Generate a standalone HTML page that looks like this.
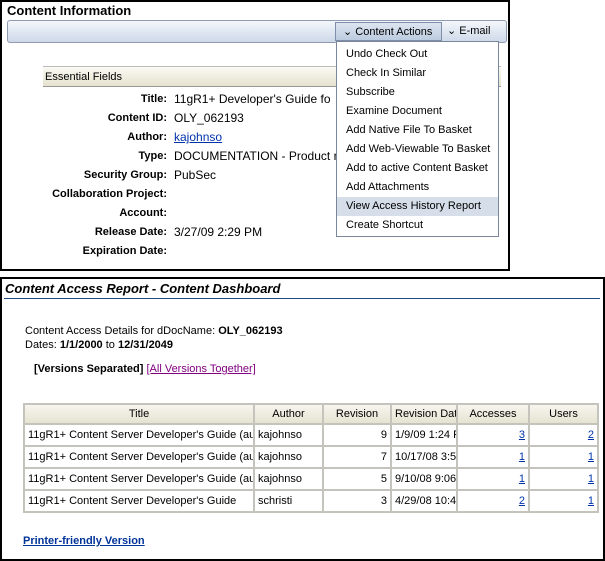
<!DOCTYPE html>
<html><head><style>
*{margin:0;padding:0;box-sizing:border-box}
body{width:605px;height:561px;background:#fff;font-family:"Liberation Sans",sans-serif;font-size:11px;color:#000;position:relative;overflow:hidden}
.abs{position:absolute}
#top{left:0;top:0;width:510px;height:271px;border:2px solid #000}
#bot{left:0;top:277px;width:605px;height:284px;border:2px solid #000}
.lbl{position:absolute;left:0;width:167px;text-align:right;font-weight:bold}
.val{position:absolute;left:174px;font-size:12px}
.row{position:absolute;left:0;height:19px;line-height:19px;width:340px}
.dd div{height:19px;line-height:19px;padding-left:9px;font-size:11px}
table{border-collapse:collapse;table-layout:fixed;position:absolute;left:23px;top:403px;width:574px;font-size:11px}
td,th{border:2px solid #c4c4bc;height:22px;padding:0 3px;white-space:nowrap;overflow:hidden}
th{background:linear-gradient(#f7f6ee,#e6e3d2);font-weight:normal;height:20px}
table a{color:#0033aa;text-decoration:underline}
</style></head><body>
<div id="top" class="abs"></div>
<div class="abs" style="left:7px;top:3px;font-weight:bold;font-size:13px">Content Information</div>
<div class="abs" style="left:7px;top:20px;width:500px;height:23px;border:1px solid #8e9bb0;border-radius:3px;background:linear-gradient(#f4f7fb,#cdd8e8)"></div>
<div class="abs" style="left:335px;top:22px;width:107px;height:19px;background:linear-gradient(#dde5f0,#bccbe0);border:1px solid #7f8ea8;line-height:18px;padding-left:7px">⌄ Content Actions</div>
<div class="abs" style="left:447px;top:22px;line-height:18px">⌄ E-mail</div>
<div class="abs" style="left:43px;top:66px;width:458px;height:21px;background:linear-gradient(#fbfaf3,#e5e2cf);border-top:1px solid #bbb;border-bottom:1px solid #999;line-height:20px;padding-left:2px">Essential Fields</div>
<div class="abs" style="left:0;top:90px;width:340px">
<div class="row" style="top:0"><span class="lbl">Title:</span><span class="val">11gR1+ Developer's Guide fo</span></div>
<div class="row" style="top:19px"><span class="lbl">Content ID:</span><span class="val">OLY_062193</span></div>
<div class="row" style="top:38px"><span class="lbl">Author:</span><span class="val" style="color:#0033aa;text-decoration:underline">kajohnso</span></div>
<div class="row" style="top:57px"><span class="lbl">Type:</span><span class="val">DOCUMENTATION - Product r</span></div>
<div class="row" style="top:76px"><span class="lbl">Security Group:</span><span class="val">PubSec</span></div>
<div class="row" style="top:95px"><span class="lbl">Collaboration Project:</span></div>
<div class="row" style="top:114px"><span class="lbl">Account:</span></div>
<div class="row" style="top:133px"><span class="lbl">Release Date:</span><span class="val">3/27/09 2:29 PM</span></div>
<div class="row" style="top:152px"><span class="lbl">Expiration Date:</span></div>
</div>
<div class="abs dd" style="left:336px;top:41px;width:163px;height:196px;background:#fff;border:1px solid #7a8699;padding-top:3px">
<div>Undo Check Out</div><div>Check In Similar</div><div>Subscribe</div><div>Examine Document</div><div>Add Native File To Basket</div><div>Add Web-Viewable To Basket</div><div>Add to active Content Basket</div><div>Add Attachments</div><div style="background:#d6dfe9">View Access History Report</div><div>Create Shortcut</div>
</div>

<div id="bot" class="abs"></div>
<div class="abs" style="left:4px;top:280px;width:596px;height:19px;border-bottom:1px solid #1f4b7f;font-style:italic;font-weight:bold;font-size:13px;line-height:17px;padding-left:1px">Content Access Report - Content Dashboard</div>
<div class="abs" style="left:25px;top:324px;line-height:14px">Content Access Details for dDocName: <b>OLY_062193</b><br>Dates: <b>1/1/2000</b> to <b>12/31/2049</b></div>
<div class="abs" style="left:34px;top:363px"><b>[Versions Separated]</b> <span style="color:#800080;text-decoration:underline">[All Versions Together]</span></div>
<table>
<colgroup><col style="width:230px"><col style="width:69px"><col style="width:68px"><col style="width:66px"><col style="width:72px"><col style="width:69px"></colgroup>
<tr><th>Title</th><th>Author</th><th>Revision</th><th style="text-align:left">Revision Date</th><th>Accesses</th><th>Users</th></tr>
<tr><td>11gR1+ Content Server Developer's Guide (aut</td><td>kajohnso</td><td style="text-align:right">9</td><td>1/9/09 1:24 P</td><td style="text-align:right"><a>3</a></td><td style="text-align:right"><a>2</a></td></tr>
<tr><td>11gR1+ Content Server Developer's Guide (aut</td><td>kajohnso</td><td style="text-align:right">7</td><td>10/17/08 3:5</td><td style="text-align:right"><a>1</a></td><td style="text-align:right"><a>1</a></td></tr>
<tr><td>11gR1+ Content Server Developer's Guide (aut</td><td>kajohnso</td><td style="text-align:right">5</td><td>9/10/08 9:06</td><td style="text-align:right"><a>1</a></td><td style="text-align:right"><a>1</a></td></tr>
<tr><td>11gR1+ Content Server Developer's Guide</td><td>schristi</td><td style="text-align:right">3</td><td>4/29/08 10:4</td><td style="text-align:right"><a>2</a></td><td style="text-align:right"><a>1</a></td></tr>
</table>
<div class="abs" style="left:23px;top:535px;font-weight:bold;color:#003399;text-decoration:underline">Printer-friendly Version</div>
</body></html>
